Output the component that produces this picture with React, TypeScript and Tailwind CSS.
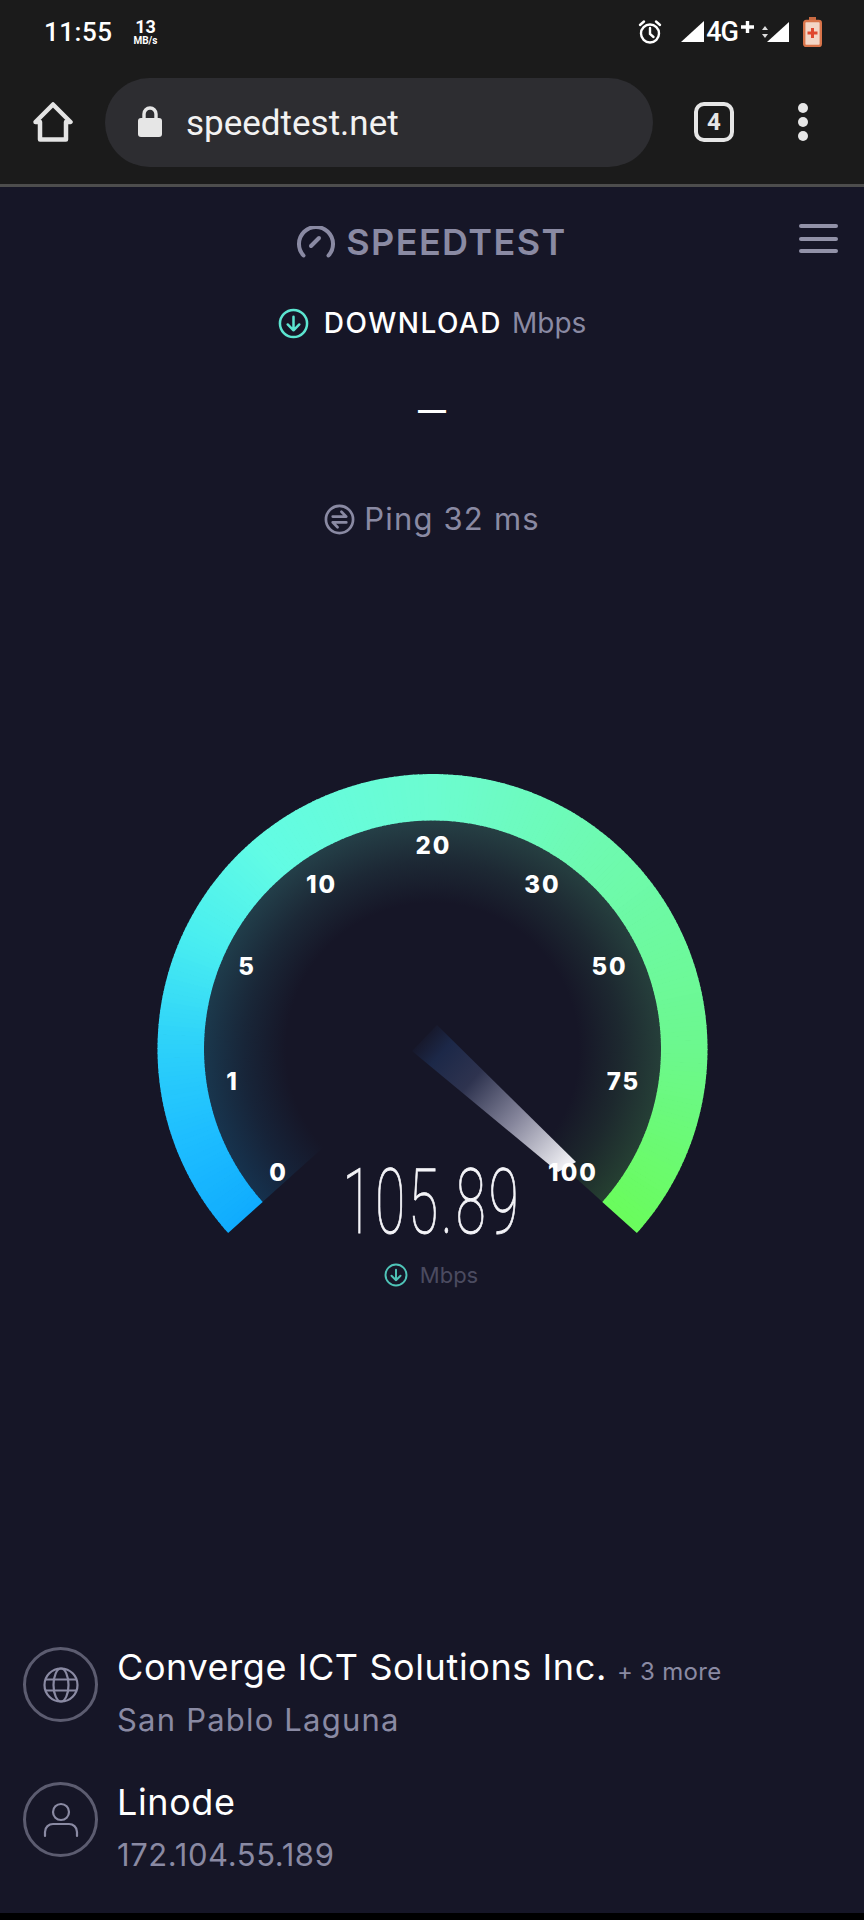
import React from "react";

const CX = 432.5;
const CY = 279; // svg starts at y=770
const RO = 275;
const RI = 228.5;
const SPAN = 132;
const BG = "#161627";

const stops: [number, number[]][] = [
  [-132, [16, 172, 254]],
  [-110, [30, 190, 255]],
  [-90, [44, 208, 250]],
  [-65, [74, 238, 240]],
  [-40, [98, 252, 228]],
  [0, [108, 252, 208]],
  [40, [110, 250, 176]],
  [90, [108, 248, 142]],
  [132, [106, 252, 92]],
];

function colorAt(a: number) {
  for (let i = 0; i < stops.length - 1; i++) {
    const [a0, c0] = stops[i];
    const [a1, c1] = stops[i + 1];
    if (a <= a1) {
      const t = (a - a0) / (a1 - a0);
      const c = c0.map((v, k) => Math.round(v + (c1[k] - v) * t));
      return `rgb(${c[0]},${c[1]},${c[2]})`;
    }
  }
  return "rgb(106,252,92)";
}

function pt(r: number, a: number) {
  const t = (a * Math.PI) / 180;
  return `${(CX + r * Math.sin(t)).toFixed(2)},${(CY - r * Math.cos(t)).toFixed(2)}`;
}

const segs: { a: number; c: string }[] = [];
for (let a = -SPAN; a < SPAN; a += 1) segs.push({ a, c: colorAt(a + 0.5) });

const labels: [string, number, number][] = [
  ["0", 277.5, 1172.5],
  ["1", 231.5, 1081.5],
  ["5", 246, 966.5],
  ["10", 320.5, 884],
  ["20", 432.5, 845.5],
  ["30", 541.5, 884],
  ["50", 608.5, 966.5],
  ["75", 622.5, 1081.5],
  ["100", 572, 1172.5],
];

function Gauge() {
  return (
    <svg width="864" height="485" viewBox="0 0 864 485" className="block">
      <defs>
        <radialGradient id="fade" gradientUnits="userSpaceOnUse" cx={CX} cy={CY} r={RI}>
          <stop offset="0.64" stopColor={BG} stopOpacity="1" />
          <stop offset="0.82" stopColor={BG} stopOpacity="0.92" />
          <stop offset="1" stopColor={BG} stopOpacity="0.82" />
        </radialGradient>
        <linearGradient id="needle" gradientUnits="userSpaceOnUse" x1="420" y1="266" x2="566" y2="396">
          <stop offset="0" stopColor={BG} />
          <stop offset="0.14" stopColor="#1c2848" />
          <stop offset="0.35" stopColor="#2e334f" />
          <stop offset="0.65" stopColor="#85859b" />
          <stop offset="1" stopColor="#f0f0f4" />
        </linearGradient>
      </defs>
      {segs.map((s) => (
        <polygon
          key={"i" + s.a}
          fill={s.c}
          points={`${CX},${CY} ${pt(RI + 1, s.a)} ${pt(RI + 1, s.a + 1.2 > SPAN ? SPAN : s.a + 1.2)}`}
        />
      ))}
      <circle cx={CX} cy={CY} r={RI + 1} fill="url(#fade)" />
      {segs.map((s) => {
        const e = s.a + 1.2 > SPAN ? SPAN : s.a + 1.2;
        return (
          <polygon
            key={"o" + s.a}
            fill={s.c}
            points={`${pt(RI, s.a)} ${pt(RO, s.a)} ${pt(RO, e)} ${pt(RI, e)}`}
          />
        );
      })}
      <polygon points="437,255 412,281 558,402 576,392" fill="url(#needle)" />
      <g fontFamily="Inter, sans-serif" fontWeight="800" fontSize="24" fill="#ffffff" textAnchor="middle" letterSpacing="2">
        {labels.map(([t, x, y]) => (
          <text key={t} x={x + 1} y={y - 770 + 8.5}>
            {t}
          </text>
        ))}
      </g>
      <text
        transform="translate(432 463) scale(0.6 1)"
        textAnchor="middle"
        fontFamily="Roboto, sans-serif"
        fontWeight="100"
        fontSize="91"
        letterSpacing="5"
        fill="#f4f4f8"
        stroke="#f4f4f8"
        strokeWidth="0.9"
      >
        105.89
      </text>
    </svg>
  );
}

function DownIcon({ size, color, sw }: { size: number; color: string; sw: number }) {
  return (
    <svg width={size} height={size} viewBox="0 0 32 32" fill="none" stroke={color} strokeWidth={sw} strokeLinecap="round" strokeLinejoin="round">
      <circle cx="16" cy="16" r="14" />
      <path d="M16 9v14M10 17l6 6 6-6" />
    </svg>
  );
}

function StatusBar() {
  return (
    <div className="h-[60px] pt-[4px] flex items-center pl-[44px] pr-[42px] text-white font-['Roboto',sans-serif]">
      <span className="text-[26px] leading-none font-medium tracking-[0.5px]">11:55</span>
      <div className="ml-[21px] flex flex-col items-center leading-none font-bold">
        <span className="text-[18px] leading-[17px]">13</span>
        <span className="text-[10px] leading-[11px]">MB/s</span>
      </div>
      <div className="ml-auto flex items-center">
        <svg width="26" height="26" viewBox="0 0 26 26" fill="none" stroke="#fff" strokeWidth="2.4" strokeLinecap="round">
          <circle cx="13" cy="14.5" r="9" />
          <path d="M13 9v6l3.5 3M3 6l4-3.5M23 6l-4-3.5" />
        </svg>
        <svg width="24" height="22" viewBox="0 0 24 22" className="ml-[18px]">
          <polygon points="0,21 23,0 23,21" fill="#fff" />
        </svg>
        <span className="ml-[1px] text-[27px] leading-none font-medium tracking-[-1px]">4G</span>
        <svg width="15" height="14" viewBox="0 0 15 14" className="ml-[2px] -mt-[10px]">
          <path d="M7.5 1v12M1 7h13" stroke="#fff" strokeWidth="3.4" />
        </svg>
        <svg width="6" height="12" viewBox="0 0 6 12" className="ml-[7px]">
          <path d="M3 0l3 4H0zM3 12l3-4H0z" fill="#ddd" />
        </svg>
        <svg width="22" height="21" viewBox="0 0 22 21" className="-ml-[1px]">
          <polygon points="0,20 22,0 22,20" fill="#fff" />
        </svg>
        <svg width="19" height="30" viewBox="0 0 19 30" className="ml-[14px]">
          <rect x="6" y="0" width="7" height="4" fill="#c96a42" />
          <rect x="1.2" y="4" width="16.6" height="25" rx="2" fill="#f3d6c6" stroke="#d8744a" strokeWidth="2.4" />
          <path d="M9.5 11v10M4.5 16h10" stroke="#e0482e" strokeWidth="3" />
        </svg>
      </div>
    </div>
  );
}

function Toolbar() {
  return (
    <div className="h-[124px] flex items-center pl-[33px] pr-[56px]">
      <svg width="40" height="40" viewBox="0 0 40 40" fill="none" stroke="#e4e4e4" strokeWidth="4.5" strokeLinejoin="round" strokeLinecap="round" className="shrink-0">
        <path d="M2.5 20L20 2.5 37.5 20H33v17.5H7V20z" />
      </svg>
      <div className="ml-[32px] w-[548px] h-[89px] rounded-[45px] bg-[#2d2d31] flex items-center pl-[33px]">
        <svg width="24" height="32" viewBox="0 0 24 32" className="shrink-0">
          <path d="M6 14V8a6 6 0 0112 0v6" fill="none" stroke="#e6e6e6" strokeWidth="3.4" />
          <rect x="0" y="12" width="24" height="19" rx="3" fill="#e6e6e6" />
        </svg>
        <span className="ml-[24px] mt-[2px] text-[35px] leading-none text-[#f2f2f2] font-['Roboto',sans-serif]">speedtest.net</span>
      </div>
      <div className="ml-[41px] w-[40px] h-[40px] rounded-[10px] border-[4px] border-[#e6e6e6] flex items-center justify-center text-[24px] font-bold text-[#e6e6e6] font-['Roboto',sans-serif] shrink-0">
        4
      </div>
      <div className="ml-auto flex flex-col gap-[4px]">
        <div className="w-[10px] h-[10px] rounded-full bg-[#e6e6e6]" />
        <div className="w-[10px] h-[10px] rounded-full bg-[#e6e6e6]" />
        <div className="w-[10px] h-[10px] rounded-full bg-[#e6e6e6]" />
      </div>
    </div>
  );
}

function Row({ icon, title, more, sub, cls, subCls }: { icon: React.ReactNode; title: string; more?: string; sub: string; cls: string; subCls: string }) {
  return (
    <div className={"flex items-start pl-[23px] " + cls}>
      <div className="w-[75px] h-[75px] rounded-full border-[3px] border-[#5c5c70] flex items-center justify-center shrink-0">{icon}</div>
      <div className="ml-[19px] -mt-[2px] flex flex-col">
        <div className="whitespace-nowrap leading-[44px] h-[44px]">
          <span className="text-[36px] tracking-[0.6px] text-white">{title}</span>
          {more && <span className="ml-[10px] text-[24px] tracking-[0.3px] text-[#8a8aa3]">{more}</span>}
        </div>
        <div className={"text-[31px] leading-[40px] mt-[11px] text-[#8a8aa3] " + subCls}>{sub}</div>
      </div>
    </div>
  );
}

export default function App() {
  return (
    <div className="w-[864px] h-[1920px] bg-[#1b1b1b] flex flex-col overflow-hidden font-['Inter',sans-serif]">
      <StatusBar />
      <Toolbar />
      <div className="h-[3px] bg-[#4d4d4d]" />
      <div className="flex-1 bg-[#161627] flex flex-col">
        <div className="h-[74px] mt-[18px] grid grid-cols-[1fr_auto_1fr] items-center">
          <div />
          <div className="flex items-center">
            <svg width="38" height="32" viewBox="0 0 38 32" fill="none" stroke="#8a8aa3" strokeWidth="4" strokeLinecap="round">
              <path d="M6.5 29.5a17 17 0 1125 0" />
              <path d="M14 20l8-8" />
            </svg>
            <span className="ml-[11px] text-[36px] leading-none font-semibold tracking-[1.4px] text-[#8a8aa3]">SPEEDTEST</span>
          </div>
          <div className="flex flex-col gap-[8.5px] items-end pr-[26px] mb-[7px]">
            <div className="w-[39px] h-[4px] rounded-full bg-[#9292a8]" />
            <div className="w-[39px] h-[4px] rounded-full bg-[#9292a8]" />
            <div className="w-[39px] h-[4px] rounded-full bg-[#9292a8]" />
          </div>
        </div>
        <div className="mt-[22px] h-[44px] flex items-center justify-center">
          <DownIcon size={31} color="#5ce5d0" sw={2.6} />
          <span className="ml-[15px] text-[28px] font-medium tracking-[1.5px] text-white">DOWNLOAD</span>
          <span className="ml-[10px] text-[28px] text-[#8a8aa3]">Mbps</span>
        </div>
        <div className="mt-[45px] h-[40px] flex items-center justify-center text-[28px] font-semibold leading-none text-white">—</div>
        <div className="mt-[67px] h-[44px] flex items-center justify-center">
          <svg width="31" height="31" viewBox="0 0 32 32" fill="none" stroke="#8a8aa3" strokeWidth="2.8" strokeLinecap="round" strokeLinejoin="round">
            <circle cx="16" cy="16" r="14" />
            <path d="M9 13h14l-5-5M23 19H9l5 5" />
          </svg>
          <span className="ml-[9px] text-[31px] text-[#8a8aa3] tracking-[1.2px]">Ping 32 ms</span>
        </div>
        <div className="mt-[229px]">
          <Gauge />
        </div>
        <div className="mt-[7px] h-[26px] flex items-center justify-center pr-[2px]">
          <DownIcon size={24} color="#4fc4b8" sw={2.6} />
          <span className="ml-[12px] text-[22px] text-[#4b4b60]">Mbps</span>
        </div>
        <div className="flex-1" />
        <Row
          cls="h-[135px]"
          subCls="tracking-[1.2px]"
          title="Converge ICT Solutions Inc."
          more="+ 3 more"
          sub="San Pablo Laguna"
          icon={
            <svg width="36" height="36" viewBox="0 0 36 36" fill="none" stroke="#8a8aa3" strokeWidth="2.2">
              <circle cx="18" cy="18" r="16.5" />
              <ellipse cx="18" cy="18" rx="7.5" ry="16.5" />
              <path d="M2.5 12.5h31M2.5 23.5h31" />
            </svg>
          }
        />
        <Row
          cls="h-[131px]"
          subCls="tracking-[0.6px]"
          title="Linode"
          sub="172.104.55.189"
          icon={
            <svg width="36" height="36" viewBox="0 0 36 36" fill="none" stroke="#8a8aa3" strokeWidth="2.2" strokeLinecap="round">
              <circle cx="18" cy="10" r="8" />
              <path d="M2 34v-4c0-5 4-8 8-8h16c4 0 8 3 8 8v4" />
            </svg>
          }
        />
      </div>
      <div className="h-[7px] bg-black" />
    </div>
  );
}
